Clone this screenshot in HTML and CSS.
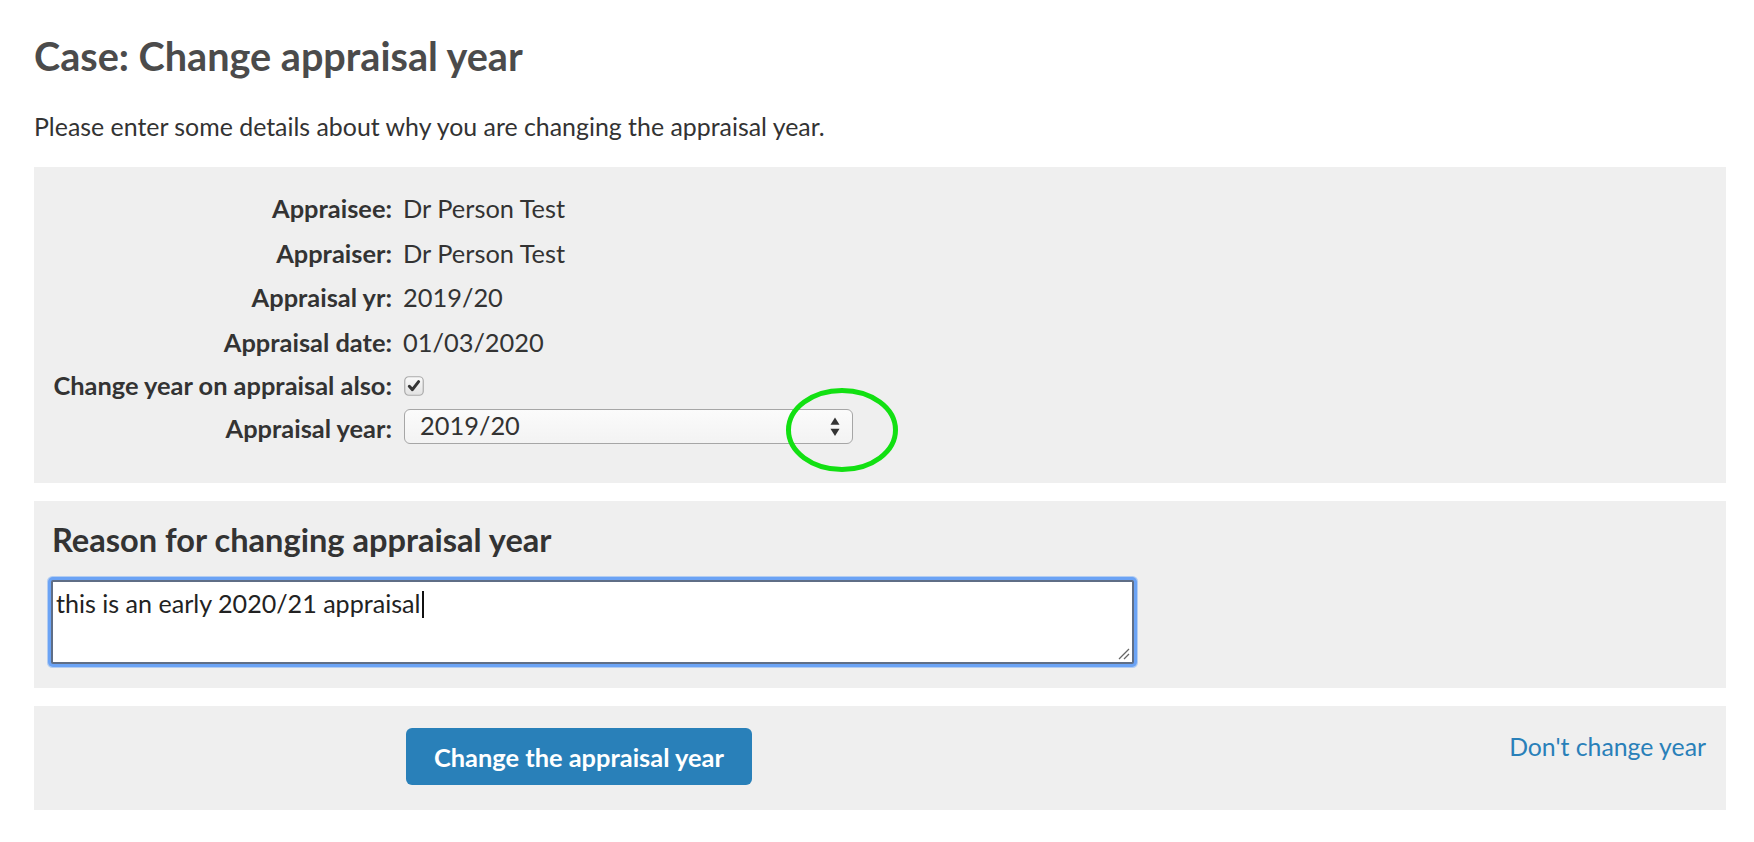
FILE: index.html
```html
<!DOCTYPE html>
<html lang="en">
<head>
<meta charset="utf-8">
<title>Case: Change appraisal year</title>
<link rel="stylesheet" href="styles.css">
</head>
<body>
<main class="page">
  <h1 class="page-title">Case: Change appraisal year</h1>
  <p class="intro">Please enter some details about why you are changing the appraisal year.</p>

  <section class="panel details">
    <div class="field-grid">
      <div class="label">Appraisee:</div><div class="value">Dr Person Test</div>
      <div class="label">Appraiser:</div><div class="value">Dr Person Test</div>
      <div class="label">Appraisal yr:</div><div class="value">2019/20</div>
      <div class="label">Appraisal date:</div><div class="value">01/03/2020</div>
      <div class="label label-check">Change year on appraisal also:</div>
      <div class="value">
        <span class="checkbox" role="checkbox" aria-checked="true">
          <svg viewBox="0 0 20 20" width="20" height="20" aria-hidden="true">
            <defs>
              <linearGradient id="cbg" x1="0" y1="0" x2="0" y2="1">
                <stop offset="0" stop-color="#fafafa"/>
                <stop offset="1" stop-color="#e2e2e2"/>
              </linearGradient>
            </defs>
            <rect x="0.75" y="0.75" width="18.5" height="18.5" rx="4" fill="url(#cbg)" stroke="#ababab" stroke-width="1.2"/>
            <path d="M5.3 10.3 L8.4 13.6 L14.6 5.6" fill="none" stroke="#353535" stroke-width="3" stroke-linecap="round" stroke-linejoin="round"/>
          </svg>
        </span>
      </div>
      <div class="label label-select">Appraisal year:</div>
      <div class="value">
        <div class="select">
          <span class="select-text">2019/20</span>
          <svg class="select-arrows" viewBox="0 0 10 20" width="10" height="20" aria-hidden="true">
            <path d="M5 0.5 L9.5 7.8 L0.5 7.8 Z" fill="#333"/>
            <path d="M0.5 11.7 L9.5 11.7 L5 19 Z" fill="#333"/>
          </svg>
        </div>
      </div>
    </div>
    <svg class="annotation" viewBox="0 0 114 86" width="114" height="86" aria-hidden="true">
      <ellipse cx="57" cy="43" rx="53.5" ry="39.5" fill="none" stroke="#12e012" stroke-width="5"/>
    </svg>
  </section>

  <section class="panel reason">
    <h2 class="reason-title">Reason for changing appraisal year</h2>
    <div class="textarea" role="textbox" aria-multiline="true">
      <span class="textarea-text">this is an early 2020/21 appraisal</span><span class="caret"></span>
      <svg class="grip" viewBox="0 0 12 12" width="12" height="12" aria-hidden="true">
        <path d="M1 11 L11 1 M6 11 L11 6" stroke="#666" stroke-width="1.3" fill="none"/>
      </svg>
    </div>
  </section>

  <section class="panel actions">
    <button class="btn-primary" type="button">Change the appraisal year</button>
    <a class="cancel-link" href="#">Don't change year</a>
  </section>
</main>
</body>
</html>
```

FILE: styles.css
```css
* { box-sizing: border-box; }

html, body {
  margin: 0;
  padding: 0;
  background: #ffffff;
}

body {
  font-family: Lato, "Open Sans", "Liberation Sans", sans-serif;
  color: #333333;
  font-size: 25px;
  line-height: 1.2;
}

.page {
  padding: 33px 28px 0 34px;
}

.page-title {
  margin: 0;
  font-size: 39.6px;
  font-weight: 700;
  line-height: 46px;
  color: #4b4b4b;
}

.intro {
  margin: 33px 0 26px 0;
  font-size: 24.9px;
  line-height: 29px;
  color: #333333;
}

.panel {
  background: #efefef;
}

.details {
  position: relative;
  padding: 19px 0 39px 0;
}

.field-grid {
  display: grid;
  grid-template-columns: 358px 1fr;
  grid-template-rows: repeat(4, 44.6px) 42px 38px;
  column-gap: 11px;
  align-items: start;
  font-size: 25.4px;
}

.label {
  text-align: right;
  font-weight: 700;
  line-height: 44.6px;
  white-space: nowrap;
}

.value {
  line-height: 44.6px;
}

.label-check {
  line-height: 42px;
}

.label-select {
  line-height: 35px;
  padding-top: 5px;
}

.checkbox {
  display: inline-block;
  width: 20px;
  height: 20px;
  margin-top: 12px;
  margin-left: 1px;
  vertical-align: top;
}

.checkbox svg { display: block; }

.select {
  display: flex;
  align-items: center;
  justify-content: space-between;
  width: 449px;
  height: 35px;
  margin-top: 3px;
  margin-left: 1px;
  padding: 0 12px 0 15px;
  border: 1px solid #a6a6a6;
  border-radius: 6px;
  background: linear-gradient(#fbfbfb, #f3f3f3);
}

.select-text {
  line-height: 33px;
  padding-bottom: 2px;
}

.select-arrows {
  display: block;
  width: 10px;
  height: 20px;
}

.annotation {
  position: absolute;
  left: 751px;
  top: 220px;
}

.reason {
  margin-top: 18px;
  padding: 20px 17px 24px 17px;
}

.reason-title {
  margin: 0 0 21px 1px;
  font-size: 32.6px;
  font-weight: 700;
  line-height: 38px;
  color: #333333;
}

.textarea {
  position: relative;
  width: 1083px;
  height: 84px;
  padding: 7px 3px;
  background: #ffffff;
  border: 2px solid #5f6e86;
  border-radius: 2px;
  box-shadow: 0 0 0 3px #6ba3f5, 0 0 0 4px rgba(107, 163, 245, 0.45);
  font-size: 25.1px;
  line-height: 29px;
  color: #222222;
}

.caret {
  display: inline-block;
  width: 2px;
  height: 27px;
  margin-left: 2px;
  vertical-align: -5px;
  background: #111111;
}

.grip {
  position: absolute;
  right: 2px;
  bottom: 2px;
}

.actions {
  margin-top: 18px;
  display: flex;
  align-items: flex-start;
  justify-content: space-between;
  padding: 22px 20px 25px 372px;
}

.btn-primary {
  height: 57px;
  padding: 0 28px;
  border: none;
  border-radius: 6px;
  background: #2980b9;
  color: #ffffff;
  font-family: Lato, "Open Sans", "Liberation Sans", sans-serif;
  font-size: 25.4px;
  font-weight: 700;
}

.cancel-link {
  margin-top: 4px;
  color: #2980b9;
  text-decoration: none;
  font-size: 24.8px;
  line-height: 29px;
}
```
